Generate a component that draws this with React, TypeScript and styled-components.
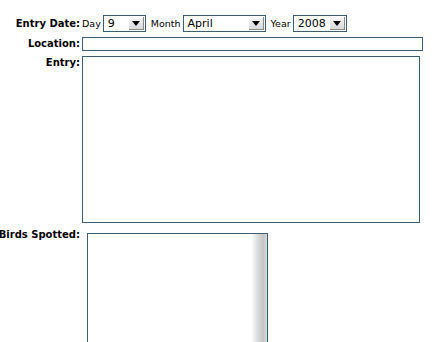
import React from 'react'
import styled, { createGlobalStyle } from 'styled-components'

const GlobalStyle = createGlobalStyle`
  html, body {
    margin: 0;
    padding: 0;
    background: #ffffff;
    overflow: hidden;
  }
  body {
    font-family: "DejaVu Sans", Verdana, sans-serif;
    font-size: 10px;
    color: #000;
  }
`

const borderColor = '#3d5f75'

interface SelectProps {
  value: string
  width: number
}

const FakeSelect: React.FC<SelectProps> = ({ value, width }) => (
  <StyledSelect style={{ width }}>
    <StyledSelectValue>{value}</StyledSelectValue>
    <StyledArrow>
      <svg width="8" height="5" viewBox="0 0 8 5">
        <path d="M0 0 L8 0 L4 5 Z" fill="#000" />
      </svg>
    </StyledArrow>
  </StyledSelect>
)

const App: React.FC = () => {
  return (
    <StyledForm>
      <GlobalStyle />
      <StyledLabel>
        <span>Entry Date:</span>
      </StyledLabel>
      <StyledDateRow>
        <StyledWord>Day</StyledWord>
        <FakeSelect value="9" width={43} />
        <StyledWord $gap>Month</StyledWord>
        <FakeSelect value="April" width={83} />
        <StyledWord $gap>Year</StyledWord>
        <FakeSelect value="2008" width={54} />
      </StyledDateRow>

      <StyledLabel>
        <span>Location:</span>
      </StyledLabel>
      <StyledInput />

      <StyledLabel $top>
        <span>Entry:</span>
      </StyledLabel>
      <StyledTextArea />

      <StyledLabel $top>
        <span>Birds Spotted:</span>
      </StyledLabel>
      <StyledListBox>
        <StyledListItems />
        <StyledScrollTrack />
      </StyledListBox>
    </StyledForm>
  )
}

const StyledForm = styled.div`
  display: grid;
  grid-template-columns: 80px 340px;
  column-gap: 2px;
  row-gap: 4px;
  padding-top: 15px;
  align-items: center;
`

const StyledLabel = styled.div<{ $top?: boolean }>`
  display: flex;
  justify-content: flex-end;
  font-weight: bold;
  white-space: nowrap;
  align-self: ${(p) => (p.$top ? 'start' : 'center')};
  padding-top: ${(p) => (p.$top ? '2px' : '0')};

  span {
    flex-shrink: 0;
  }
`

const StyledDateRow = styled.div`
  display: flex;
  align-items: center;
  height: 17px;
`

const StyledWord = styled.span<{ $gap?: boolean }>`
  font-size: 9.5px;
  margin-left: ${(p) => (p.$gap ? '5px' : '0')};
  margin-right: 2px;
`

const StyledSelect = styled.div`
  box-sizing: border-box;
  height: 17px;
  border: 1px solid ${borderColor};
  display: flex;
  align-items: stretch;
  background: #fff;
`

const StyledSelectValue = styled.div`
  flex: 1;
  font-size: 11px;
  line-height: 15px;
  padding-left: 4px;
  overflow: hidden;
`

const StyledArrow = styled.div`
  width: 14px;
  margin: 1px 1px 1px 0;
  display: flex;
  align-items: center;
  justify-content: center;
  background: linear-gradient(#f6f6f6, #dadada);
  border-right: 1px solid #8a8a8a;
  border-bottom: 1px solid #8a8a8a;
`

const StyledInput = styled.div`
  box-sizing: border-box;
  width: 341px;
  height: 14px;
  border: 1px solid ${borderColor};
  margin-top: 1px;
`

const StyledTextArea = styled.div`
  box-sizing: border-box;
  width: 338px;
  height: 167px;
  border: 1px solid ${borderColor};
  margin-top: 1px;
`

const StyledListBox = styled.div`
  box-sizing: border-box;
  width: 181px;
  height: 130px;
  margin-left: 5px;
  margin-top: 6px;
  border: 1px solid ${borderColor};
  display: flex;
`

const StyledListItems = styled.div`
  flex: 1;
`

const StyledScrollTrack = styled.div`
  width: 15px;
  background: linear-gradient(to right, #fafafa 0%, #e2e2e2 30%, #c4c4c4 75%, #dcdcdc 100%);
`

export default App
